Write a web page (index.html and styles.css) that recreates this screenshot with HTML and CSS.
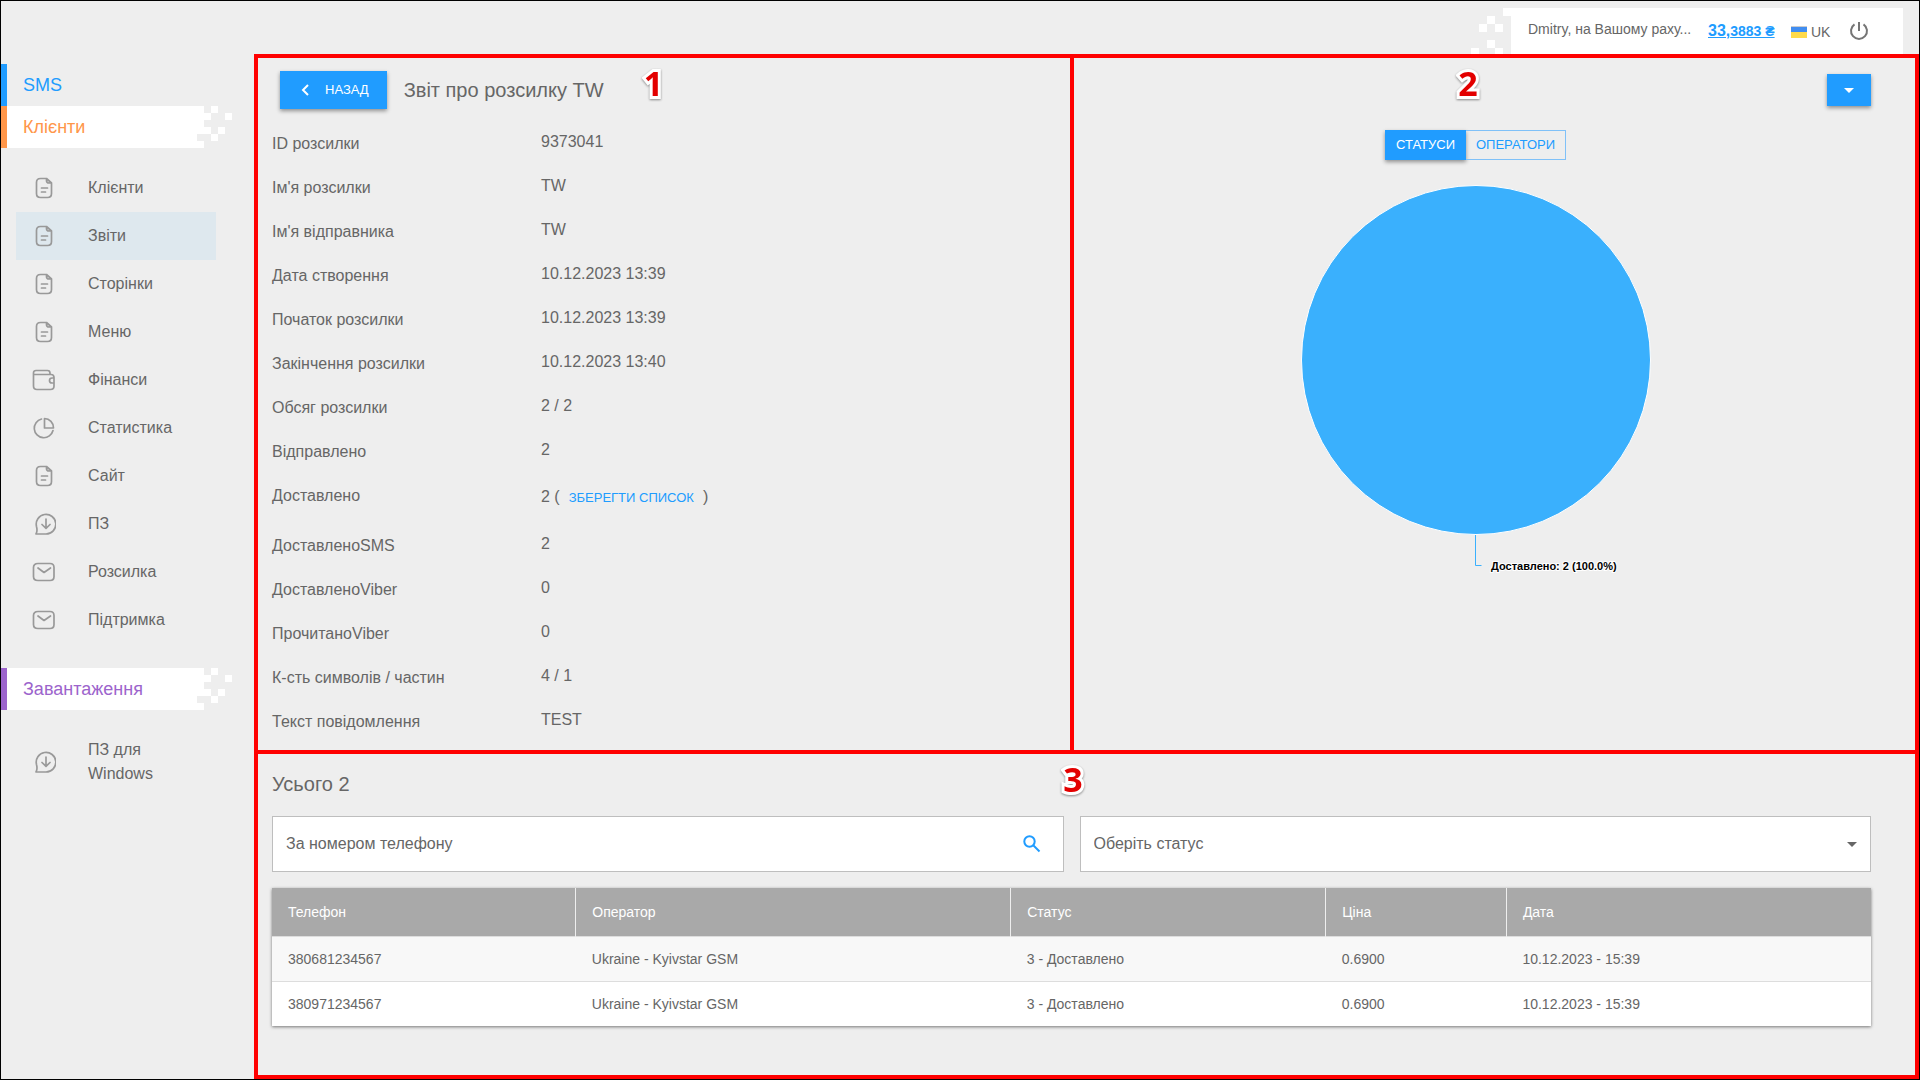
FILE: index.html
```html
<!DOCTYPE html>
<html lang="uk">
<head>
  <meta charset="UTF-8">
  <meta name="viewport" content="width=device-width, initial-scale=1.0">
  <title>Звіт про розсилку TW</title>
  <link rel="stylesheet" href="styles.css">
</head>
<body>
  <!-- shared icons -->
  <svg class="sprite" aria-hidden="true">
    <symbol id="i-doc" viewBox="0 0 24 24"><path d="M14.5 2.5h-6c-2.8 0-4 1.3-4 4v11c0 2.7 1.2 4 4 4h7c2.800 0 4-1.300 4-4V7zM14.5 2.5v2c0 1.700.8 2.500 2.500 2.500h2.500M9.500 12h6M9.500 16h4"/></symbol>
    <symbol id="i-wallet" viewBox="0 0 24 24"><path d="M2 6.500h17c2 0 3 1 3 3V10h-2a2.500 2.500 0 0 0 0 5h2v3c0 2.500-1 3.500-3.500 3.500H5c-2.500 0-3.500-1-3.500-3.500V5c0-1.800 1-2.500 2.500-2.500h11.500c1.500 0 2.500.7 2.500 2.500v1.500M22 10v5"/></symbol>
    <symbol id="i-chart" viewBox="0 0 24 24"><path d="M9.500 3A9.500 9.500 0 1 0 21 14.500M12.500 2.500V12h9A9.300 9.300 0 0 0 12.500 2.500z"/></symbol>
    <symbol id="i-load" viewBox="0 0 24 24"><path d="M4 22h10a9.800 9.800 0 1 0-9.500-7.500c.8 3 .9 5-.5 7.500zM14 7v9M10 12.500l4 3.800 4-3.800"/></symbol>
    <symbol id="i-mail" viewBox="0 0 24 24"><path d="M6 3.500h12c3 0 4 1.500 4 4v9c0 2.500-1 4-4 4H6c-3 0-4.500-1.500-4.500-4v-9c0-2.500 1.500-4 4.500-4zM6 8l6 4.500L18.500 8"/></symbol>
    <symbol id="i-pixels" viewBox="0 0 35 42"><path d="M0 0h7v28H0zM14 0h7v7h-7zM7 7h7v7H7zM28 7h7v7h-7zM7 21h7v7H7zM21 21h7v7h-7zM14 28h7v7h-7zM0 35h7v7H0z"/></symbol>
  </svg>

  <header class="topbar">
    <svg class="topbar-pixels" viewBox="0 0 40 46" aria-hidden="true"><path d="M32 0h8v8h-8zM16 8h8v8h-8zM8 16h8v8H8zM24 16h8v8h-8zM16 32h8v8h-8zM0 40h8v6H0zM24 40h8v6h-8z" fill="#fff"/></svg>
    <div class="account">
      <span class="account-name">Dmitry, на Вашому раху...</span>
      <a class="balance" href="#"><span class="balance-main">33,</span>3883 ₴</a>
      <button class="lang" type="button"><span class="flag"></span>UK</button>
      <button class="power" type="button" aria-label="Вихід">
        <svg viewBox="0 0 18 18"><path d="M9 0v9M4.500 2.300a8 8 0 1 0 9 0"/></svg>
      </button>
    </div>
  </header>

  <div class="layout">
    <nav class="sidebar">
      <a class="section sms" href="#">SMS</a>
      <a class="section clients" href="#">Клієнти<svg class="pixels"><use href="#i-pixels"/></svg></a>
      <div class="menu">
        <a href="#"><svg class="icon"><use href="#i-doc"/></svg>Клієнти</a>
        <a class="active" href="#"><svg class="icon"><use href="#i-doc"/></svg>Звіти</a>
        <a href="#"><svg class="icon"><use href="#i-doc"/></svg>Сторінки</a>
        <a href="#"><svg class="icon"><use href="#i-doc"/></svg>Меню</a>
        <a href="#"><svg class="icon"><use href="#i-wallet"/></svg>Фінанси</a>
        <a href="#"><svg class="icon"><use href="#i-chart"/></svg>Статистика</a>
        <a href="#"><svg class="icon"><use href="#i-doc"/></svg>Сайт</a>
        <a href="#"><svg class="icon"><use href="#i-load"/></svg>ПЗ</a>
        <a href="#"><svg class="icon"><use href="#i-mail"/></svg>Розсилка</a>
        <a href="#"><svg class="icon"><use href="#i-mail"/></svg>Підтримка</a>
      </div>
      <a class="section downloads" href="#">Завантаження<svg class="pixels"><use href="#i-pixels"/></svg></a>
      <div class="menu">
        <a href="#"><svg class="icon"><use href="#i-load"/></svg>ПЗ для<br>Windows</a>
      </div>
    </nav>

    <main class="panels">
      <section class="panel report">
        <span class="mark">1</span>
        <div class="report-head">
          <button class="btn back" type="button"><svg viewBox="0 0 8 12"><path d="M7 1L2 6l5 5"/></svg>НАЗАД</button>
          <h1>Звіт про розсилку TW</h1>
        </div>
        <dl class="details">
          <dt>ID розсилки</dt><dd>9373041</dd>
          <dt>Ім'я розсилки</dt><dd>TW</dd>
          <dt>Ім'я відправника</dt><dd>TW</dd>
          <dt>Дата створення</dt><dd>10.12.2023 13:39</dd>
          <dt>Початок розсилки</dt><dd>10.12.2023 13:39</dd>
          <dt>Закінчення розсилки</dt><dd>10.12.2023 13:40</dd>
          <dt>Обсяг розсилки</dt><dd>2 / 2</dd>
          <dt>Відправлено</dt><dd>2</dd>
          <dt>Доставлено</dt><dd>2 (<button class="link-btn" type="button">ЗБЕРЕГТИ СПИСОК</button>)</dd>
          <dt>ДоставленоSMS</dt><dd>2</dd>
          <dt>ДоставленоViber</dt><dd>0</dd>
          <dt>ПрочитаноViber</dt><dd>0</dd>
          <dt>К-сть символів / частин</dt><dd>4 / 1</dd>
          <dt>Текст повідомлення</dt><dd>TEST</dd>
        </dl>
      </section>

      <section class="panel stats">
        <span class="mark">2</span>
        <button class="btn export" type="button" aria-label="Меню звіту"><span class="caret"></span></button>
        <div class="tabs">
          <button class="btn" type="button">СТАТУСИ</button>
          <button class="tab" type="button">ОПЕРАТОРИ</button>
        </div>
        <svg class="pie" viewBox="0 0 350 400" role="img" aria-label="Доставлено: 2 (100.0%)">
          <circle cx="175" cy="175" r="174.5" fill="#3ab0fd" stroke="#fff"/>
          <path d="M174.5 350v30.5h6" fill="none" stroke="#3ab0fd"/>
          <text x="190" y="385">Доставлено: 2 (100.0%)</text>
        </svg>
      </section>

      <section class="panel phones">
        <span class="mark">3</span>
        <h2>Усього 2</h2>
        <div class="filters">
          <div class="field">
            <input type="text" placeholder="За номером телефону" aria-label="За номером телефону">
            <button class="search" type="button" aria-label="Пошук">
              <svg viewBox="0 0 18 18"><path d="M10.500 10.500l6 6"/><circle cx="6.500" cy="6.500" r="5.200"/></svg>
            </button>
          </div>
          <div class="field">
            <select aria-label="Оберіть статус"><option>Оберіть статус</option></select>
            <span class="caret"></span>
          </div>
        </div>
        <table>
          <thead>
            <tr><th class="c-phone">Телефон</th><th class="c-operator">Оператор</th><th class="c-status">Статус</th><th class="c-price">Ціна</th><th>Дата</th></tr>
          </thead>
          <tbody>
            <tr><td>380681234567</td><td>Ukraine - Kyivstar GSM</td><td>3 - Доставлено</td><td>0.6900</td><td>10.12.2023 - 15:39</td></tr>
            <tr><td>380971234567</td><td>Ukraine - Kyivstar GSM</td><td>3 - Доставлено</td><td>0.6900</td><td>10.12.2023 - 15:39</td></tr>
          </tbody>
        </table>
      </section>
    </main>
  </div>
</body>
</html>
```
FILE: styles.css
```css
* {
    box-sizing: border-box;
}

body {
    margin: 0;
    min-height: 100vh;
    display: flex;
    flex-direction: column;
    border: 1px solid #000;
    background: #eee;
    color: #666;
    font-family: "Liberation Sans", Arial, sans-serif;
    font-size: 16px;
    line-height: 24px;
}

a {
    color: inherit;
    text-decoration: none;
}

button, input, select {
    font: inherit;
    color: inherit;
    border: 0;
    padding: 0;
    background: none;
}

button {
    cursor: pointer;
}

h1, h2 {
    margin: 0;
    font-size: 20px;
    font-weight: 400;
}

.sprite {
    position: absolute;
    width: 0;
    height: 0;
}

/* top bar */
.topbar {
    display: flex;
    justify-content: flex-end;
    padding: 7px 16px 0 0;
}

.topbar-pixels {
    width: 40px;
    height: 46px;
}

.account {
    display: flex;
    align-items: center;
    width: 392px;
    height: 46px;
    padding-left: 17px;
    background: #fff;
    font-size: 14px;
}

.account-name {
    width: 180px;
    padding-bottom: 4px;
    white-space: nowrap;
}

.balance {
    width: 83px;
    padding-bottom: 1px;
    color: #209cff;
    font-weight: 700;
    text-decoration: underline;
}

.balance-main {
    font-size: 16px;
}

.lang {
    display: flex;
    align-items: center;
    width: 59px;
    padding-top: 2px;
}

.flag {
    width: 16px;
    height: 12px;
    margin-right: 4px;
    border-top: 1px solid #ccc;
    background: linear-gradient(#418df0 50%, #ffda4a 50%);
}

.power svg {
    display: block;
    width: 18px;
    height: 18px;
    fill: none;
    stroke: #757575;
    stroke-width: 2;
    overflow: visible;
}

.layout {
    flex: 1;
    display: flex;
}

/* sidebar */
.sidebar {
    flex: 0 0 253px;
    padding-top: 10px;
}

.section {
    display: flex;
    align-items: center;
    justify-content: space-between;
    height: 42px;
    width: 231px;
    padding-left: 16px;
    border-left: 6px solid;
    font-size: 18px;
}

.pixels {
    width: 35px;
    height: 42px;
    fill: #fff;
}

.sms {
    color: #209cff;
}

.clients, .downloads {
    background: linear-gradient(#fff, #fff) no-repeat 0 0 / 190px 100%;
}

.clients {
    color: #ff9649;
}

.downloads {
    color: #9c64cc;
}

.menu {
    padding: 16px 38px 24px 15px;
}

.menu a {
    display: flex;
    align-items: center;
    padding: 12px 16px;
}

.menu .active {
    background: #dee8ee;
}

.icon {
    width: 24px;
    height: 24px;
    margin-right: 32px;
    fill: none;
    stroke: #999;
    stroke-width: 1.7;
    stroke-linecap: round;
    stroke-linejoin: round;
    overflow: visible;
}

/* red panels, the lines are the grid gaps */
.panels {
    flex: 1;
    display: grid;
    grid-template-columns: 812fr 841fr;
    grid-template-rows: auto 1fr;
    gap: 4px;
    padding: 4px;
    background: #f00;
}

.panel {
    position: relative;
    background: #eee;
}

.mark {
    position: absolute;
    top: 3px;
    color: #e30000;
    font: 700 34px/44px "Open Sans", sans-serif;
    -webkit-text-stroke: 6px #fff;
    stroke-linejoin: round;
    paint-order: stroke fill;
    filter: drop-shadow(0 1px 1px #888);
}

.report .mark {
    left: 47.5%;
}

.stats .mark {
    left: 45.7%;
}

.phones .mark {
    left: 48.6%;
}

.btn {
    background: #209cff;
    color: #fff;
    font-size: 13px;
    box-shadow: 0 2px 4px rgba(0, 0, 0, 0.4);
}

.caret {
    width: 0;
    border: 5px solid transparent;
    border-top-color: currentColor;
    border-bottom: 0;
}

/* report details */
.report {
    padding: 13px 14px 16px;
}

.report-head {
    display: flex;
    align-items: center;
    gap: 17px;
    padding-left: 8px;
}

.back {
    display: flex;
    align-items: center;
    height: 38px;
    padding: 0 18px 0 21px;
}

.back svg {
    width: 8px;
    height: 12px;
    margin-right: 16px;
    fill: none;
    stroke: #fff;
    stroke-width: 2;
}

.details {
    display: grid;
    grid-template-columns: 269px 1fr;
    row-gap: 18px;
    margin: 21px 0 0;
}

.details dt {
    padding-top: 2px;
}

.details dd {
    margin: 0;
}

.link-btn {
    height: 32px;
    padding: 0 9px;
    color: #209cff;
    font-size: 13px;
}

/* chart */
.stats {
    display: flex;
    flex-direction: column;
    align-items: center;
    padding: 16px 44px 0 6px;
}

.export {
    display: flex;
    align-items: center;
    justify-content: center;
    align-self: flex-end;
    width: 44px;
    height: 32px;
}

.tabs {
    display: flex;
    height: 30px;
    margin: 24px 0 25px;
}

.tabs .btn {
    padding: 0 11px;
}

.tab {
    padding: 0 10px;
    border: 1px solid #80c1f8;
    border-left: 0;
    color: #209cff;
    font-size: 13px;
}

.pie {
    width: 350px;
    height: 400px;
    overflow: visible;
}

.pie text {
    font-size: 11px;
    font-weight: 700;
    fill: #000;
    stroke: #fff;
    stroke-width: 2px;
    paint-order: stroke;
}

/* phone list */
.phones {
    grid-column: 1 / -1;
    padding: 18px 44px 48px 14px;
}

.filters {
    display: grid;
    grid-template-columns: 1fr 1fr;
    gap: 16px;
    margin: 20px 0 16px;
}

.field {
    display: flex;
    align-items: center;
    height: 56px;
    padding: 0 13px;
    border: 1px solid #bebebe;
    background: #fff;
}

.field input, .field select {
    flex: 1;
    height: 100%;
    outline: 0;
    appearance: none;
}

.field input::placeholder {
    color: #666;
    opacity: 1;
}

.search {
    padding: 0 9px;
}

.search svg {
    display: block;
    width: 18px;
    height: 18px;
    fill: none;
    stroke: #209cff;
    stroke-width: 2;
}

table {
    width: 100%;
    table-layout: fixed;
    border-collapse: collapse;
    background: #fff;
    box-shadow: 0 1px 3px rgba(0, 0, 0, 0.5);
    font-size: 14px;
}

th, td {
    height: 45px;
    padding: 0 16px;
    text-align: left;
    font-weight: 400;
}

th {
    height: 48px;
    background: #a9a9a9;
    color: #fff;
    border-right: 1px solid #eee;
}

th:last-child {
    border-right: 0;
}

td {
    border-top: 1px solid #ddd;
}

tbody tr:first-child {
    background: #f8f8f8;
}

.c-phone { width: 19%; }
.c-operator { width: 27.2%; }
.c-status { width: 19.7%; }
.c-price { width: 11.3%; }
```
